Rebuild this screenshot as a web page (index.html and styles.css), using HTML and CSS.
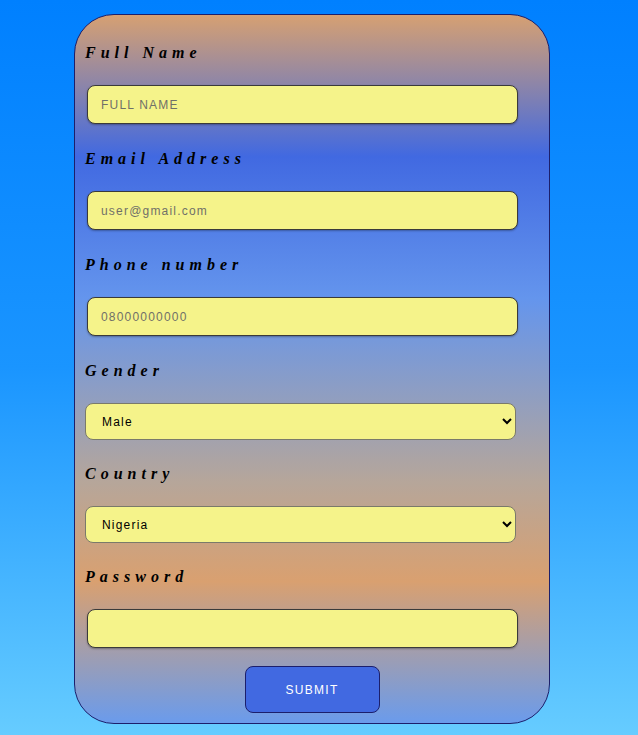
FILE: index.html
```html
<!DOCTYPE html>
<html lang="en">
<head>
<meta charset="utf-8">
<title>Form</title>
<link rel="stylesheet" href="styles.css">
</head>
<body>
<div class="page">
  <form class="card">
    <label class="lbl">Full Name</label>
    <input class="field" type="text" placeholder="FULL NAME">
    <label class="lbl">Email Address</label>
    <input class="field" type="email" placeholder="user@gmail.com">
    <label class="lbl">Phone number</label>
    <input class="field" type="tel" placeholder="08000000000">
    <label class="lbl">Gender</label>
    <select class="sel"><option>Male</option><option>Female</option></select>
    <label class="lbl">Country</label>
    <select class="sel"><option>Nigeria</option><option>Ghana</option></select>
    <label class="lbl">Password</label>
    <input class="field last" type="password">
    <button class="submit" type="button">SUBMIT</button>
  </form>
</div>
</body>
</html>
```
FILE: styles.css
```css
html, body {
  margin: 0;
  padding: 0;
}
body {
  min-height: 735px;
  background: linear-gradient(to bottom, #0080ff 0%, #1a95ff 50%, #66ccff 100%);
  font-family: "Liberation Sans", Arial, sans-serif;
}
.page {
  padding: 14px 0 0 74px;
}
.card {
  box-sizing: border-box;
  width: 476px;
  border: 1px solid #1c1f6b;
  border-radius: 40px;
  padding: 28px 0 10px 10px;
  display: flex;
  flex-direction: column;
  align-items: flex-start;
  background: linear-gradient(to bottom,
    #d6a072 0%,
    #4169e1 20%,
    #6495ed 40%,
    #b6a69a 66%,
    #d9a070 80%,
    #6a9bec 100%);
}
.lbl {
  font-family: "Liberation Serif", "Times New Roman", serif;
  font-weight: bold;
  font-style: italic;
  font-size: 16px;
  line-height: 20px;
  letter-spacing: 5px;
  color: #000;
  margin-bottom: 22px;
}
.field {
  box-sizing: border-box;
  width: 431px;
  height: 39px;
  margin: 0 0 25px 2px;
  padding: 0 13px;
  border: 1px solid #3a3a3a;
  border-radius: 8px;
  background: #f5f38a;
  box-shadow: 0 1px 2px rgba(0, 0, 0, 0.3);
  font-family: "Liberation Sans", Arial, sans-serif;
  font-size: 12px;
  letter-spacing: 1.2px;
  color: #000;
  outline: none;
}
.field::placeholder {
  color: #707068;
}
.field.last {
  margin-bottom: 18px;
}
.sel {
  box-sizing: border-box;
  width: 431px;
  height: 37px;
  margin: 0 0 24px 0;
  padding: 0 12px;
  border: 1px solid #7a7a6a;
  border-radius: 8px;
  background-color: #f5f38a;
  font-family: "Liberation Sans", Arial, sans-serif;
  font-size: 12px;
  letter-spacing: 1.2px;
  color: #000;
}
.submit {
  align-self: center;
  margin-left: -10px;
  box-sizing: border-box;
  width: 135px;
  height: 47px;
  border: 1px solid #1c1f6b;
  border-radius: 8px;
  background: #4169e1;
  color: #fff;
  font-family: "Liberation Sans", Arial, sans-serif;
  font-size: 12px;
  letter-spacing: 1.3px;
  cursor: pointer;
}
```
